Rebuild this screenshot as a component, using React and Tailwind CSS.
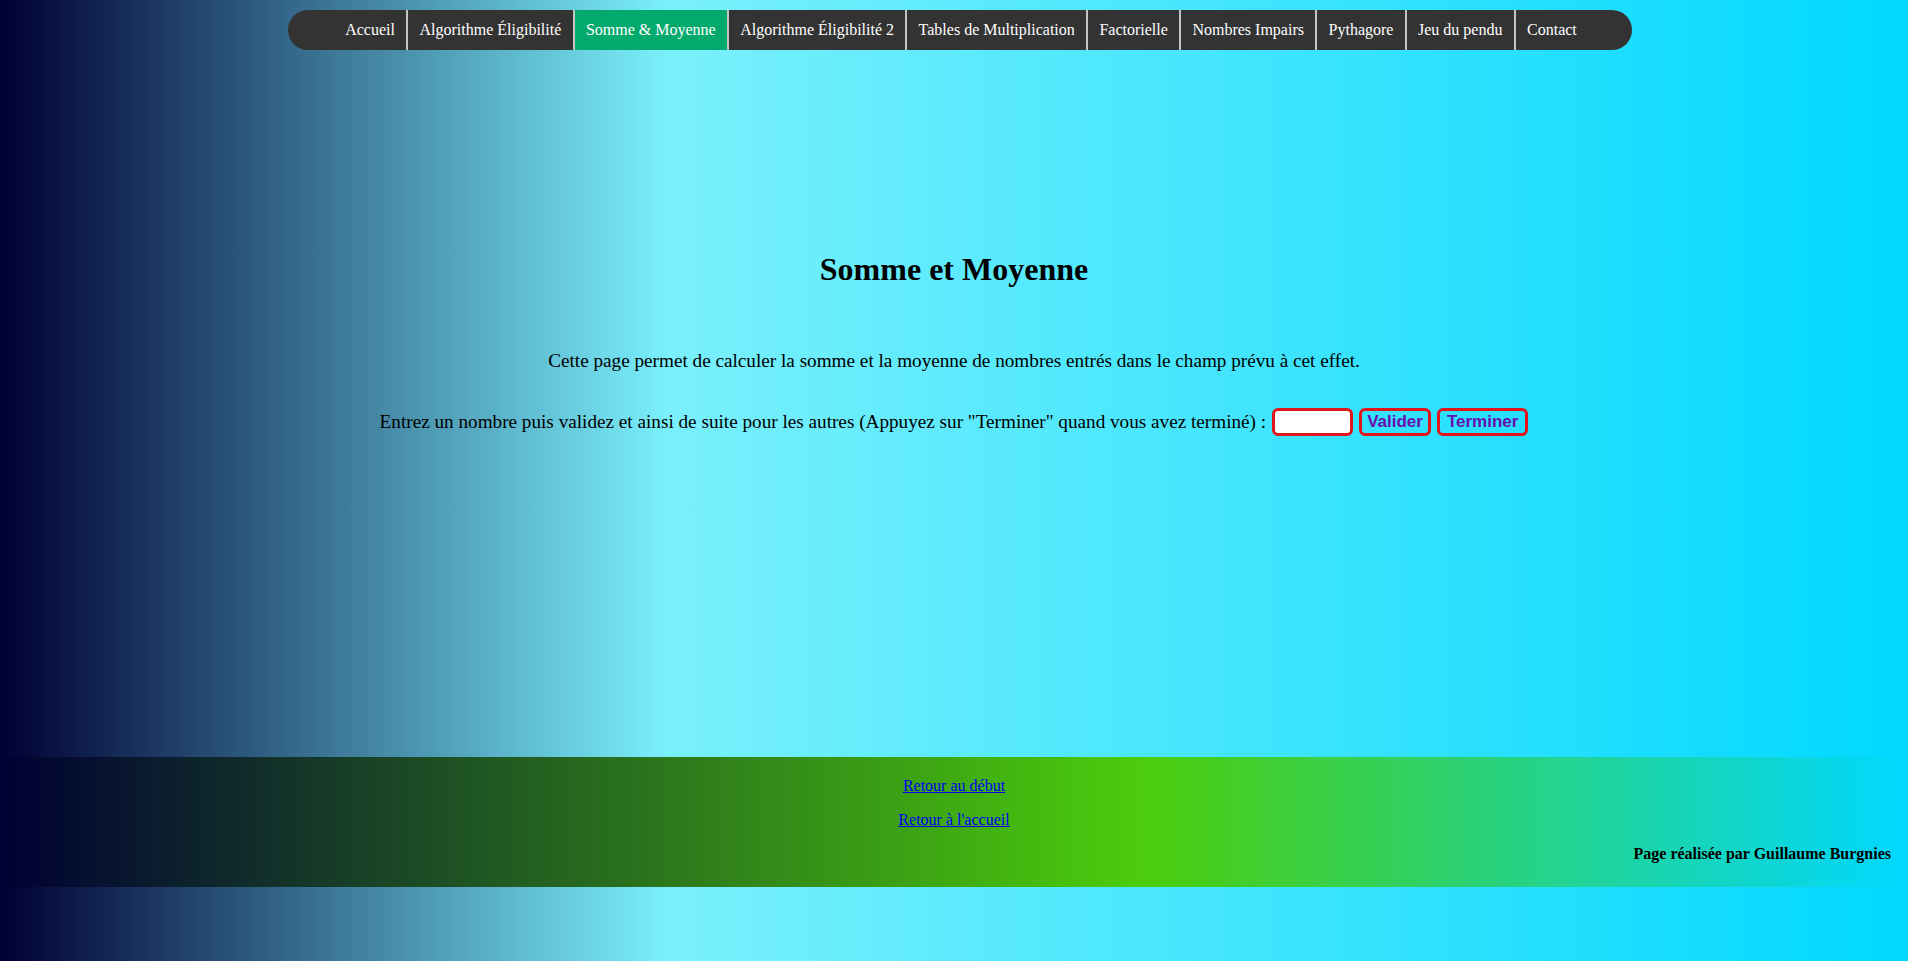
const NAV = [
  "Accueil",
  "Algorithme Éligibilité",
  "Somme & Moyenne",
  "Algorithme Éligibilité 2",
  "Tables de Multiplication",
  "Factorielle",
  "Nombres Impairs",
  "Pythagore",
  "Jeu du pendu",
  "Contact",
];

export default function App() {
  return (
    <div className="min-h-screen w-full bg-[linear-gradient(to_right,#000033_0%,#7af0fc_35%,#00d8ff_100%)] font-['Liberation_Serif',serif] text-black flex flex-col">
      {/* Nav */}
      <div className="flex justify-center pt-[10px] pl-[12px]">
        <ul className="flex h-[40px] rounded-[20px] bg-[#333333] pl-[46px] pr-[44px]">
          {NAV.map((n, i) => (
            <li
              key={n}
              className={
                "flex items-center px-[11.3px] text-[16px] text-white " +
                (i < NAV.length - 1 ? "border-r-2 border-[#c4c4c4] " : "") +
                (n === "Somme & Moyenne" ? "bg-[#04aa6d]" : "")
              }
            >
              {n}
            </li>
          ))}
        </ul>
      </div>

      {/* Main */}
      <div className="flex flex-col items-center h-[707px]">
        <h1 className="mt-[201px] text-[32px] font-bold leading-[37px]">
          Somme et Moyenne
        </h1>
        <p className="mt-[62px] text-[19.2px] leading-[22px]">
          Cette page permet de calculer la somme et la moyenne de nombres entrés
          dans le champ prévu à cet effet.
        </p>
        <div className="mt-[36px] flex items-center gap-[6px] text-[19.2px] leading-[22px]">
          <span>
            Entrez un nombre puis validez et ainsi de suite pour les autres
            (Appuyez sur "Terminer" quand vous avez terminé) :
          </span>
          <input
            type="text"
            className="h-[28px] w-[81px] rounded-[6px] border-[3px] border-[#e0161c] bg-white outline-none"
          />
          <button className="h-[28px] rounded-[6px] border-[3px] border-[#e0161c] px-[5px] font-['Liberation_Sans',sans-serif] text-[17px] font-bold text-[#6a0dad]">
            Valider
          </button>
          <button className="h-[28px] rounded-[6px] border-[3px] border-[#e0161c] px-[7px] font-['Liberation_Sans',sans-serif] text-[17px] font-bold text-[#6a0dad]">
            Terminer
          </button>
        </div>
      </div>

      {/* Footer */}
      <footer className="flex flex-col gap-[16px] bg-[linear-gradient(to_right,#000033_0%,#4ccd0c_60%,#00d8ff_100%)] pt-[20px] pb-[24px] text-[16px] leading-[18px]">
        <p className="text-center">
          <a href="#" className="text-[#0000ee] underline">
            Retour au début
          </a>
        </p>
        <p className="text-center">
          <a href="#" className="text-[#0000ee] underline">
            Retour à l'accueil
          </a>
        </p>
        <p className="pr-[17px] text-right font-bold">
          Page réalisée par Guillaume Burgnies
        </p>
      </footer>
      <div className="h-[74px]" />
    </div>
  );
}
